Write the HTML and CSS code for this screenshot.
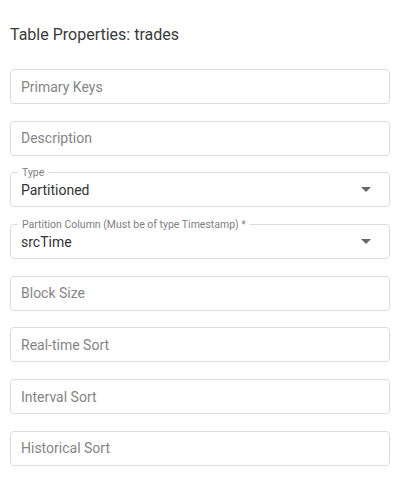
FILE: index.html
```html
<!DOCTYPE html>
<html>
<head>
<meta charset="utf-8">
<link rel="stylesheet" href="styles.css">
</head>
<body>
<div class="panel">
  <h2 class="title">Table Properties: trades</h2>
  <div class="fields">
    <div class="field"><span class="placeholder">Primary Keys</span></div>
    <div class="field"><span class="placeholder">Description</span></div>
    <div class="field select">
      <span class="label">Type</span>
      <span class="value">Partitioned</span>
      <span class="arrow"></span>
    </div>
    <div class="field select">
      <span class="label">Partition Column (Must be of type Timestamp) *</span>
      <span class="value">srcTime</span>
      <span class="arrow"></span>
    </div>
    <div class="field"><span class="placeholder">Block Size</span></div>
    <div class="field"><span class="placeholder">Real-time Sort</span></div>
    <div class="field"><span class="placeholder">Interval Sort</span></div>
    <div class="field"><span class="placeholder">Historical Sort</span></div>
  </div>
</div>
</body>
</html>
```
FILE: styles.css
```css
html, body {
  margin: 0;
  padding: 0;
  background: #ffffff;
  font-family: Roboto, "Liberation Sans", sans-serif;
}
.panel {
  padding: 0 12px 0 10px;
}
.title {
  margin: 0 0 25px 0;
  padding-top: 26px;
  font-size: 16px;
  font-weight: 400;
  line-height: 18px;
  color: #3a3a3a;
}
.fields {
  display: flex;
  flex-direction: column;
  gap: 16.7px;
}
.field {
  position: relative;
  box-sizing: border-box;
  height: 35px;
  border: 1px solid #dcdcdc;
  border-radius: 4px;
  display: flex;
  align-items: center;
  padding: 0 10px;
}
.placeholder {
  font-size: 14px;
  color: #858585;
}
.label {
  position: absolute;
  left: 7px;
  top: -6px;
  padding: 0 4px;
  background: #ffffff;
  font-size: 10.5px;
  line-height: 11px;
  color: #808080;
}
.value {
  font-size: 14px;
  color: #333333;
}
.arrow {
  margin-left: auto;
  margin-right: 8px;
  width: 0;
  height: 0;
  border-left: 5px solid transparent;
  border-right: 5px solid transparent;
  border-top: 5px solid #666666;
}
```
